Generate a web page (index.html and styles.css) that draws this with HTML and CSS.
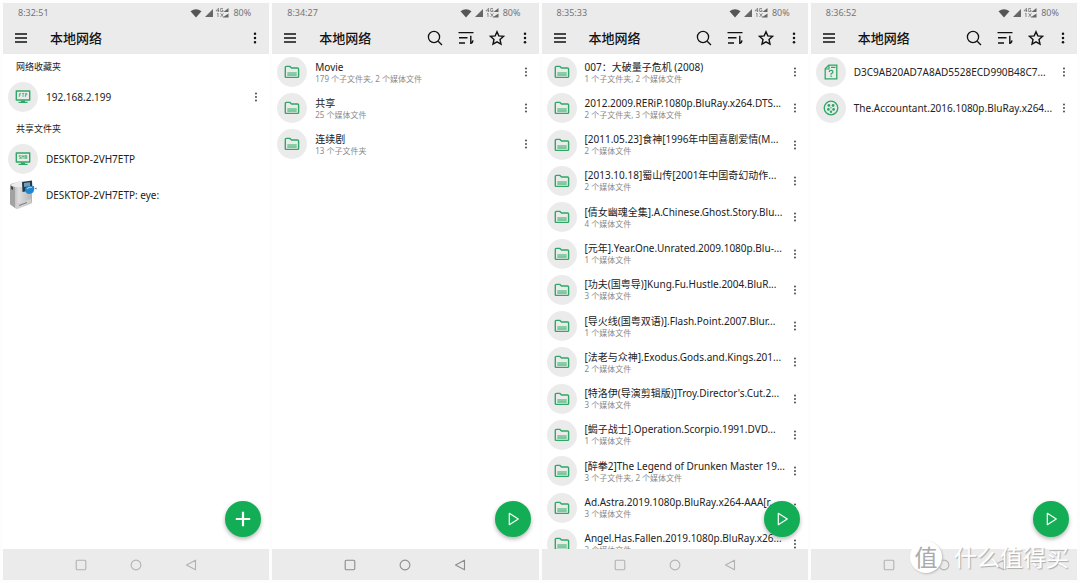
FILE: index.html
```
<!DOCTYPE html>
<html lang="zh-CN">
<head>
<meta charset="utf-8">
<title>本地网络</title>
<link rel="stylesheet" href="styles.css">
</head>
<body>
<svg class="sprite" aria-hidden="true">
  <symbol id="menu" viewBox="0 0 14 14"><path d="M1 3h12M1 7h12M1 11h12" fill="none" stroke="#111" stroke-width="1.4"/></symbol>
  <symbol id="dots" viewBox="0 0 4 12"><circle cx="2" cy="1.800" r="1.250"/><circle cx="2" cy="6" r="1.250"/><circle cx="2" cy="10.200" r="1.250"/></symbol>
  <symbol id="search" viewBox="0 0 16 16"><g fill="none" stroke="#111" stroke-width="1.300"><circle cx="7" cy="7" r="5.600"/><path d="M11.200 11.200l3.800 3.800"/></g></symbol>
  <symbol id="sort" viewBox="0 0 16 16"><path d="M.5 2.600h15M1 7.800h8.500M1 13h6M12.800 5.800v8.200M12.800 13.200q2-.4 2.200-2.800" fill="none" stroke="#111" stroke-width="1.400"/></symbol>
  <symbol id="star" viewBox="0 0 16 16"><path d="M8 1.800l1.800 4.100 4.600.5-3.400 3.100 1 4.600L8 11.800l-4 2.300 1-4.600L1.600 6.400l4.600-.5z" fill="none" stroke="#111" stroke-width="1.400"/></symbol>
  <symbol id="signals" viewBox="0 0 40 12">
    <path d="M.5 4.300Q6 0 11.500 4.300L6 10.500z" fill="#555"/>
    <path d="M23 2v8h-8z" fill="#666"/>
    <path d="M38.500 1v4h-5zM38.500 6.500v4h-6z" fill="#666"/>
    <g fill="none" stroke="#777" stroke-width=".8"><path d="M28.500 5V1.200L26 3.800h3.300M33 1.500h-2.300v3h2.300V3.200h-1M27 7l1-.7V10M30.500 6.300l3 3.700M33.500 6.300l-3 3.700"/></g>
  </symbol>
  <symbol id="folder" viewBox="0 0 16 16"><path d="M1.300 3.400q0-1 1-1h3.600l1.700 1.600h6q1 0 1 1v7.400q0 1-1 1H2.300q-1 0-1-1z" fill="none" stroke="#2fa866" stroke-width="1.400"/><path d="M3.300 8h9.400v3.300H3.300z" fill="#8bcba6"/><path d="M3.300 11.300h9.400" stroke="#2fa866" stroke-width=".6"/></symbol>
  <symbol id="monitor" viewBox="0 0 16 14"><path d="M1.300 1h13.400v9H1.300z" fill="none" stroke="#2fa866" stroke-width="1.400" stroke-linejoin="round"/><path d="M6 10.500h4v1.300h2.500v1.300h-9v-1.300H6z" fill="#2fa866"/></symbol>
  <symbol id="ftp" viewBox="0 0 12 5"><path d="M1.500 5V.5H3.500M1.500 2.500h1.700M4.800.5h2.600M6.100.5V5M9 5V.5h1.700v2H9" fill="none" stroke="#2fa866" stroke-width=".9"/></symbol>
  <symbol id="smb" viewBox="0 0 12 5"><path d="M3.200.5H1.300v2h1.900v2H1.100M4.700 5V.5L6 2.500 7.300.5V5M8.900.5h1.800v4H8.900zM8.900 2.500h1.800" fill="none" stroke="#2fa866" stroke-width=".9"/></symbol>
  <symbol id="unknown" viewBox="0 0 14 16"><path d="M4.800 1.200h8v13.600H1.200V4.800z" fill="none" stroke="#2fa866" stroke-width="1.300"/><path d="M5 1v4H1M7 3.400h4.500" fill="none" stroke="#2fa866" stroke-width="1.200"/><path d="M5.200 8q0-1.600 1.900-1.600T9 8q0 .8-1.900 1.700v1M7.100 11.600v1.300" fill="none" stroke="#2fa866" stroke-width="1.200"/></symbol>
  <symbol id="reel" viewBox="0 0 16 16"><circle cx="8" cy="8" r="6.800" fill="none" stroke="#2fa866" stroke-width="1.300"/><g fill="#2fa866"><circle cx="5.900" cy="5.500" r="1.400"/><circle cx="10.100" cy="5.500" r="1.400"/><circle cx="5.400" cy="9.400" r="1.400"/><circle cx="10.600" cy="9.400" r="1.400"/><circle cx="8" cy="11.800" r="1.200"/><circle cx="8" cy="7.700" r=".7"/></g></symbol>
  <linearGradient id="metal" x1="0" x2="1"><stop offset="0" stop-color="#a5a5a5"/><stop offset=".4" stop-color="#dedede"/><stop offset="1" stop-color="#b5b5b5"/></linearGradient>
  <symbol id="drive" viewBox="0 0 28 30">
    <path d="M1 5q0-1 2-1.500L12 1l11 1v20q0 1-1 1.500L9 29q-2 .5-3-1l-4-3q-1-1-1-2z" fill="url(#metal)"/>
    <path d="M1 5l5 2v21l-5-4z" fill="#a2a2a2"/><path d="M1 5l10-4 11 1-9 5H6z" fill="#ececec"/>
    <path d="M2 6l2 1v3l-2-1z" fill="#444"/><path d="M7 24l15-5v3.500L8 28.500z" fill="#d0d0d0"/><path d="M10 25.500l8-3" stroke="#666" stroke-width=".8"/>
    <path d="M13 2l10-1.500.5 9.500-10 2z" fill="#24394a"/><path d="M15 3l6-.8v4L15 7z" fill="#6d9fb9"/>
    <path d="M16 10q-.5-3 3-3.500l6-.5q1.500 7-4.500 8-4 0-4.500-4z" fill="#2387cf"/><path d="M18 9q2-2.500 5-1.500" fill="none" stroke="#8bd1f5" stroke-width="1.200"/><path d="M25.500 8.500l2-1v2z" fill="#277dbb"/>
  </symbol>
  <symbol id="plus" viewBox="0 0 16 16"><path d="M8 .8v14.400M.8 8h14.400" stroke="#fff" stroke-width="2.200"/></symbol>
  <symbol id="play" viewBox="0 0 14 14"><path d="M3.300 1.300l9 5.700-9 5.700z" fill="none" stroke="#fff" stroke-width="1.200" stroke-linejoin="round"/></symbol>
  <symbol id="recent" viewBox="0 0 12 12"><rect x="1.200" y="1.200" width="9.600" height="9.600" rx="1.200" fill="none" stroke="currentColor" stroke-width="1.100"/></symbol>
  <symbol id="home" viewBox="0 0 12 12"><circle cx="6" cy="6" r="4.900" fill="none" stroke="currentColor" stroke-width="1.100"/></symbol>
  <symbol id="back" viewBox="0 0 12 12"><path d="M10.500 1.200v9.600L1.500 6z" fill="none" stroke="currentColor" stroke-width="1.100" stroke-linejoin="round"/></symbol>
</svg>

<div class="board">
  <section class="screen">
    <header class="top">
      <div class="status"><span>8:32:51</span><svg class="signals"><use href="#signals"/></svg><span>80%</span></div>
      <div class="appbar"><button class="menu" aria-label="菜单"><svg class="i14"><use href="#menu"/></svg></button><h1>本地网络</h1><button class="more-top" aria-label="更多"><svg class="dots"><use href="#dots"/></svg></button></div>
    </header>
    <main class="content groups">
      <div><h2>网络收藏夹</h2>
        <ul class="list"><li class="row"><span class="avatar"><svg class="monitor"><use href="#monitor"/><use href="#ftp" x="3" y="3" width="10" height="4"/></svg></span><div class="text"><p>192.168.2.199</p></div><button class="more" aria-label="更多"><svg class="dots"><use href="#dots"/></svg></button></li></ul></div>
      <div><h2>共享文件夹</h2>
        <ul class="list"><li class="row"><span class="avatar"><svg class="monitor"><use href="#monitor"/><use href="#smb" x="3" y="3" width="10" height="4"/></svg></span><div class="text"><p>DESKTOP-2VH7ETP</p></div></li>
        <li class="row"><span class="avatar plain"><svg class="drive"><use href="#drive"/></svg></span><div class="text"><p>DESKTOP-2VH7ETP: eye:</p></div></li></ul></div>
      <button class="fab" aria-label="添加"><svg class="i16"><use href="#plus"/></svg></button>
    </main>
    <nav class="nav"><button aria-label="最近"><svg class="i12"><use href="#recent"/></svg></button><button aria-label="主页"><svg class="i12"><use href="#home"/></svg></button><button aria-label="返回"><svg class="i12"><use href="#back"/></svg></button></nav>
  </section>

  <section class="screen">
    <header class="top">
      <div class="status"><span>8:34:27</span><svg class="signals"><use href="#signals"/></svg><span>80%</span></div>
      <div class="appbar"><button class="menu" aria-label="菜单"><svg class="i14"><use href="#menu"/></svg></button><h1>本地网络</h1><button class="tool" aria-label="搜索"><svg class="i16"><use href="#search"/></svg></button><button class="tool" aria-label="排序"><svg class="i16"><use href="#sort"/></svg></button><button class="tool" aria-label="收藏"><svg class="i16"><use href="#star"/></svg></button><button class="more-top" aria-label="更多"><svg class="dots"><use href="#dots"/></svg></button></div>
    </header>
    <main class="content">
      <ul class="list">
        <li class="row"><span class="avatar"><svg class="i16"><use href="#folder"/></svg></span><div class="text"><p>Movie</p><small>179 个子文件夹, 2 个媒体文件</small></div><button class="more" aria-label="更多"><svg class="dots"><use href="#dots"/></svg></button></li>
        <li class="row"><span class="avatar"><svg class="i16"><use href="#folder"/></svg></span><div class="text"><p>共享</p><small>25 个媒体文件</small></div><button class="more" aria-label="更多"><svg class="dots"><use href="#dots"/></svg></button></li>
        <li class="row"><span class="avatar"><svg class="i16"><use href="#folder"/></svg></span><div class="text"><p>连续剧</p><small>13 个子文件夹</small></div><button class="more" aria-label="更多"><svg class="dots"><use href="#dots"/></svg></button></li>
      </ul>
      <button class="fab" aria-label="播放"><svg class="i14"><use href="#play"/></svg></button>
    </main>
    <nav class="nav dark"><button aria-label="最近"><svg class="i12"><use href="#recent"/></svg></button><button aria-label="主页"><svg class="i12"><use href="#home"/></svg></button><button aria-label="返回"><svg class="i12"><use href="#back"/></svg></button></nav>
  </section>

  <section class="screen">
    <header class="top">
      <div class="status"><span>8:35:33</span><svg class="signals"><use href="#signals"/></svg><span>80%</span></div>
      <div class="appbar"><button class="menu" aria-label="菜单"><svg class="i14"><use href="#menu"/></svg></button><h1>本地网络</h1><button class="tool" aria-label="搜索"><svg class="i16"><use href="#search"/></svg></button><button class="tool" aria-label="排序"><svg class="i16"><use href="#sort"/></svg></button><button class="tool" aria-label="收藏"><svg class="i16"><use href="#star"/></svg></button><button class="more-top" aria-label="更多"><svg class="dots"><use href="#dots"/></svg></button></div>
    </header>
    <main class="content">
      <ul class="list long">
        <li class="row"><span class="avatar"><svg class="i16"><use href="#folder"/></svg></span><div class="text"><p>007：大破量子危机 (2008)</p><small>1 个子文件夹, 2 个媒体文件</small></div><button class="more" aria-label="更多"><svg class="dots"><use href="#dots"/></svg></button></li>
        <li class="row"><span class="avatar"><svg class="i16"><use href="#folder"/></svg></span><div class="text"><p>2012.2009.RERiP.1080p.BluRay.x264.DTS...</p><small>2 个子文件夹, 3 个媒体文件</small></div><button class="more" aria-label="更多"><svg class="dots"><use href="#dots"/></svg></button></li>
        <li class="row"><span class="avatar"><svg class="i16"><use href="#folder"/></svg></span><div class="text"><p>[2011.05.23]食神[1996年中国喜剧爱情(M...</p><small>2 个媒体文件</small></div><button class="more" aria-label="更多"><svg class="dots"><use href="#dots"/></svg></button></li>
        <li class="row"><span class="avatar"><svg class="i16"><use href="#folder"/></svg></span><div class="text"><p>[2013.10.18]蜀山传[2001年中国奇幻动作...</p><small>2 个媒体文件</small></div><button class="more" aria-label="更多"><svg class="dots"><use href="#dots"/></svg></button></li>
        <li class="row"><span class="avatar"><svg class="i16"><use href="#folder"/></svg></span><div class="text"><p>[倩女幽魂全集].A.Chinese.Ghost.Story.Blu...</p><small>4 个媒体文件</small></div><button class="more" aria-label="更多"><svg class="dots"><use href="#dots"/></svg></button></li>
        <li class="row"><span class="avatar"><svg class="i16"><use href="#folder"/></svg></span><div class="text"><p>[元年].Year.One.Unrated.2009.1080p.Blu-...</p><small>1 个媒体文件</small></div><button class="more" aria-label="更多"><svg class="dots"><use href="#dots"/></svg></button></li>
        <li class="row"><span class="avatar"><svg class="i16"><use href="#folder"/></svg></span><div class="text"><p>[功夫(国粤导)]Kung.Fu.Hustle.2004.BluR...</p><small>3 个媒体文件</small></div><button class="more" aria-label="更多"><svg class="dots"><use href="#dots"/></svg></button></li>
        <li class="row"><span class="avatar"><svg class="i16"><use href="#folder"/></svg></span><div class="text"><p>[导火线(国粤双语)].Flash.Point.2007.Blur...</p><small>1 个媒体文件</small></div><button class="more" aria-label="更多"><svg class="dots"><use href="#dots"/></svg></button></li>
        <li class="row"><span class="avatar"><svg class="i16"><use href="#folder"/></svg></span><div class="text"><p>[法老与众神].Exodus.Gods.and.Kings.201...</p><small>2 个媒体文件</small></div><button class="more" aria-label="更多"><svg class="dots"><use href="#dots"/></svg></button></li>
        <li class="row"><span class="avatar"><svg class="i16"><use href="#folder"/></svg></span><div class="text"><p>[特洛伊(导演剪辑版)]Troy.Director's.Cut.2...</p><small>3 个媒体文件</small></div><button class="more" aria-label="更多"><svg class="dots"><use href="#dots"/></svg></button></li>
        <li class="row"><span class="avatar"><svg class="i16"><use href="#folder"/></svg></span><div class="text"><p>[蝎子战士].Operation.Scorpio.1991.DVD...</p><small>1 个媒体文件</small></div><button class="more" aria-label="更多"><svg class="dots"><use href="#dots"/></svg></button></li>
        <li class="row"><span class="avatar"><svg class="i16"><use href="#folder"/></svg></span><div class="text"><p>[醉拳2]The Legend of Drunken Master 19...</p><small>3 个子文件夹, 2 个媒体文件</small></div><button class="more" aria-label="更多"><svg class="dots"><use href="#dots"/></svg></button></li>
        <li class="row"><span class="avatar"><svg class="i16"><use href="#folder"/></svg></span><div class="text"><p>Ad.Astra.2019.1080p.BluRay.x264-AAA[r...</p><small>3 个媒体文件</small></div><button class="more" aria-label="更多"><svg class="dots"><use href="#dots"/></svg></button></li>
        <li class="row"><span class="avatar"><svg class="i16"><use href="#folder"/></svg></span><div class="text"><p>Angel.Has.Fallen.2019.1080p.BluRay.x26...</p><small>2 个媒体文件</small></div><button class="more" aria-label="更多"><svg class="dots"><use href="#dots"/></svg></button></li>
      </ul>
      <button class="fab" aria-label="播放"><svg class="i14"><use href="#play"/></svg></button>
    </main>
    <nav class="nav"><button aria-label="最近"><svg class="i12"><use href="#recent"/></svg></button><button aria-label="主页"><svg class="i12"><use href="#home"/></svg></button><button aria-label="返回"><svg class="i12"><use href="#back"/></svg></button></nav>
  </section>

  <section class="screen">
    <header class="top">
      <div class="status"><span>8:36:52</span><svg class="signals"><use href="#signals"/></svg><span>80%</span></div>
      <div class="appbar"><button class="menu" aria-label="菜单"><svg class="i14"><use href="#menu"/></svg></button><h1>本地网络</h1><button class="tool" aria-label="搜索"><svg class="i16"><use href="#search"/></svg></button><button class="tool" aria-label="排序"><svg class="i16"><use href="#sort"/></svg></button><button class="tool" aria-label="收藏"><svg class="i16"><use href="#star"/></svg></button><button class="more-top" aria-label="更多"><svg class="dots"><use href="#dots"/></svg></button></div>
    </header>
    <main class="content">
      <ul class="list">
        <li class="row"><span class="avatar"><svg class="i16"><use href="#unknown"/></svg></span><div class="text"><p>D3C9AB20AD7A8AD5528ECD990B48C7...</p></div><button class="more" aria-label="更多"><svg class="dots"><use href="#dots"/></svg></button></li>
        <li class="row"><span class="avatar"><svg class="i16"><use href="#reel"/></svg></span><div class="text"><p>The.Accountant.2016.1080p.BluRay.x264...</p></div><button class="more" aria-label="更多"><svg class="dots"><use href="#dots"/></svg></button></li>
      </ul>
      <button class="fab" aria-label="播放"><svg class="i14"><use href="#play"/></svg></button>
    </main>
    <nav class="nav"><button aria-label="最近"><svg class="i12"><use href="#recent"/></svg></button><button aria-label="主页"><svg class="i12"><use href="#home"/></svg></button><button aria-label="返回"><svg class="i12"><use href="#back"/></svg></button></nav>
    <div class="watermark"><span class="badge">值</span><span>什么值得买</span></div>
  </section>
</div>
</body>
</html>
```
FILE: styles.css
```
* { box-sizing: border-box; }
body {
  margin: 0;
  background: #fdfdfd;
  color: #222;
  font-family: "Noto Sans", "Noto Sans CJK SC", sans-serif;
}
h1, h2, p, ul { margin: 0; padding: 0; font-weight: 400; }
ul { list-style: none; }
svg { display: block; flex: none; }
button {
  display: flex;
  align-items: center;
  justify-content: center;
  flex: none;
  padding: 0;
  border: 0;
  background: none;
  color: inherit;
}
.sprite { position: absolute; width: 0; height: 0; }
.board {
  display: grid;
  grid-template-columns: repeat(4, minmax(0, 1fr));
  gap: 3px;
  height: 100vh;
  padding: 3px;
}
.screen {
  position: relative;
  display: flex;
  flex-direction: column;
  min-height: 0;
  background: #fff;
}
.top { background: #ebebeb; }
.status {
  display: flex;
  align-items: center;
  height: 20px;
  padding: 0 18px 0 15px;
  color: #757575;
  font-size: 9px;
  line-height: 12px;
}
.signals { width: 40px; height: 12px; margin: 0 3px 0 auto; }
.appbar {
  display: flex;
  align-items: center;
  height: 31px;
  padding: 0 2px 1px 0;
}
.menu { width: 36px; height: 30px; }
.appbar h1 {
  flex: 1;
  padding-left: 11px;
  color: #111;
  font-size: 13px;
  font-weight: 500;
  line-height: 18px;
}
.tool { width: 31px; height: 30px; }
.more-top { width: 24px; height: 30px; }
.i12 { width: 12px; height: 12px; }
.i14 { width: 14px; height: 14px; }
.i16 { width: 16px; height: 16px; }
.dots { width: 4px; height: 12px; fill: #111; }
.content { position: relative; flex: 1; min-height: 0; overflow: hidden; }
.groups { display: flex; flex-direction: column; gap: 1px; }
h2 { padding-left: 13px; font-size: 9px; line-height: 25px; }
.list { display: flex; flex-direction: column; }
.long { min-height: 508px; }
.row {
  display: flex;
  align-items: center;
  flex: 1 0 36px;
  padding: 0 6px 0 5px;
}
.avatar {
  display: flex;
  align-items: center;
  justify-content: center;
  flex: none;
  width: 30px;
  height: 30px;
  margin-right: 8px;
  border-radius: 50%;
  background: #ebebeb;
}
.plain { background: none; }
.monitor { width: 16px; height: 14px; }
.drive { width: 28px; height: 30px; }
.text { flex: 1; min-width: 0; white-space: nowrap; }
.text p { font-size: 10px; line-height: 13px; }
.text small { display: block; color: #8a8a8a; font-size: 8px; line-height: 10px; }
.more { width: 14px; height: 24px; }
.more .dots { height: 10px; fill: #555; }
.fab {
  position: absolute;
  right: 8px;
  bottom: 12px;
  width: 36px;
  height: 36px;
  border-radius: 50%;
  background: #13ad55;
  box-shadow: 0 2px 4px rgba(0, 0, 0, .3);
}
.nav {
  display: flex;
  align-items: center;
  justify-content: center;
  height: 31px;
  background: #ebebeb;
  color: #b2b2b2;
}
.nav button { width: 55px; height: 31px; }
.dark { color: #8c8c8c; }
.watermark {
  position: absolute;
  right: 8px;
  bottom: 7px;
  display: flex;
  align-items: center;
  gap: 12px;
  color: #fff;
  font-size: 23px;
  line-height: 32px;
  text-shadow: 1px 1px 1px #aaa;
}
.badge {
  width: 32px;
  height: 32px;
  border-radius: 50%;
  background: #fff;
  box-shadow: 1px 1px 2px #bbb;
  color: #aaa;
  text-align: center;
  text-shadow: none;
}
```
